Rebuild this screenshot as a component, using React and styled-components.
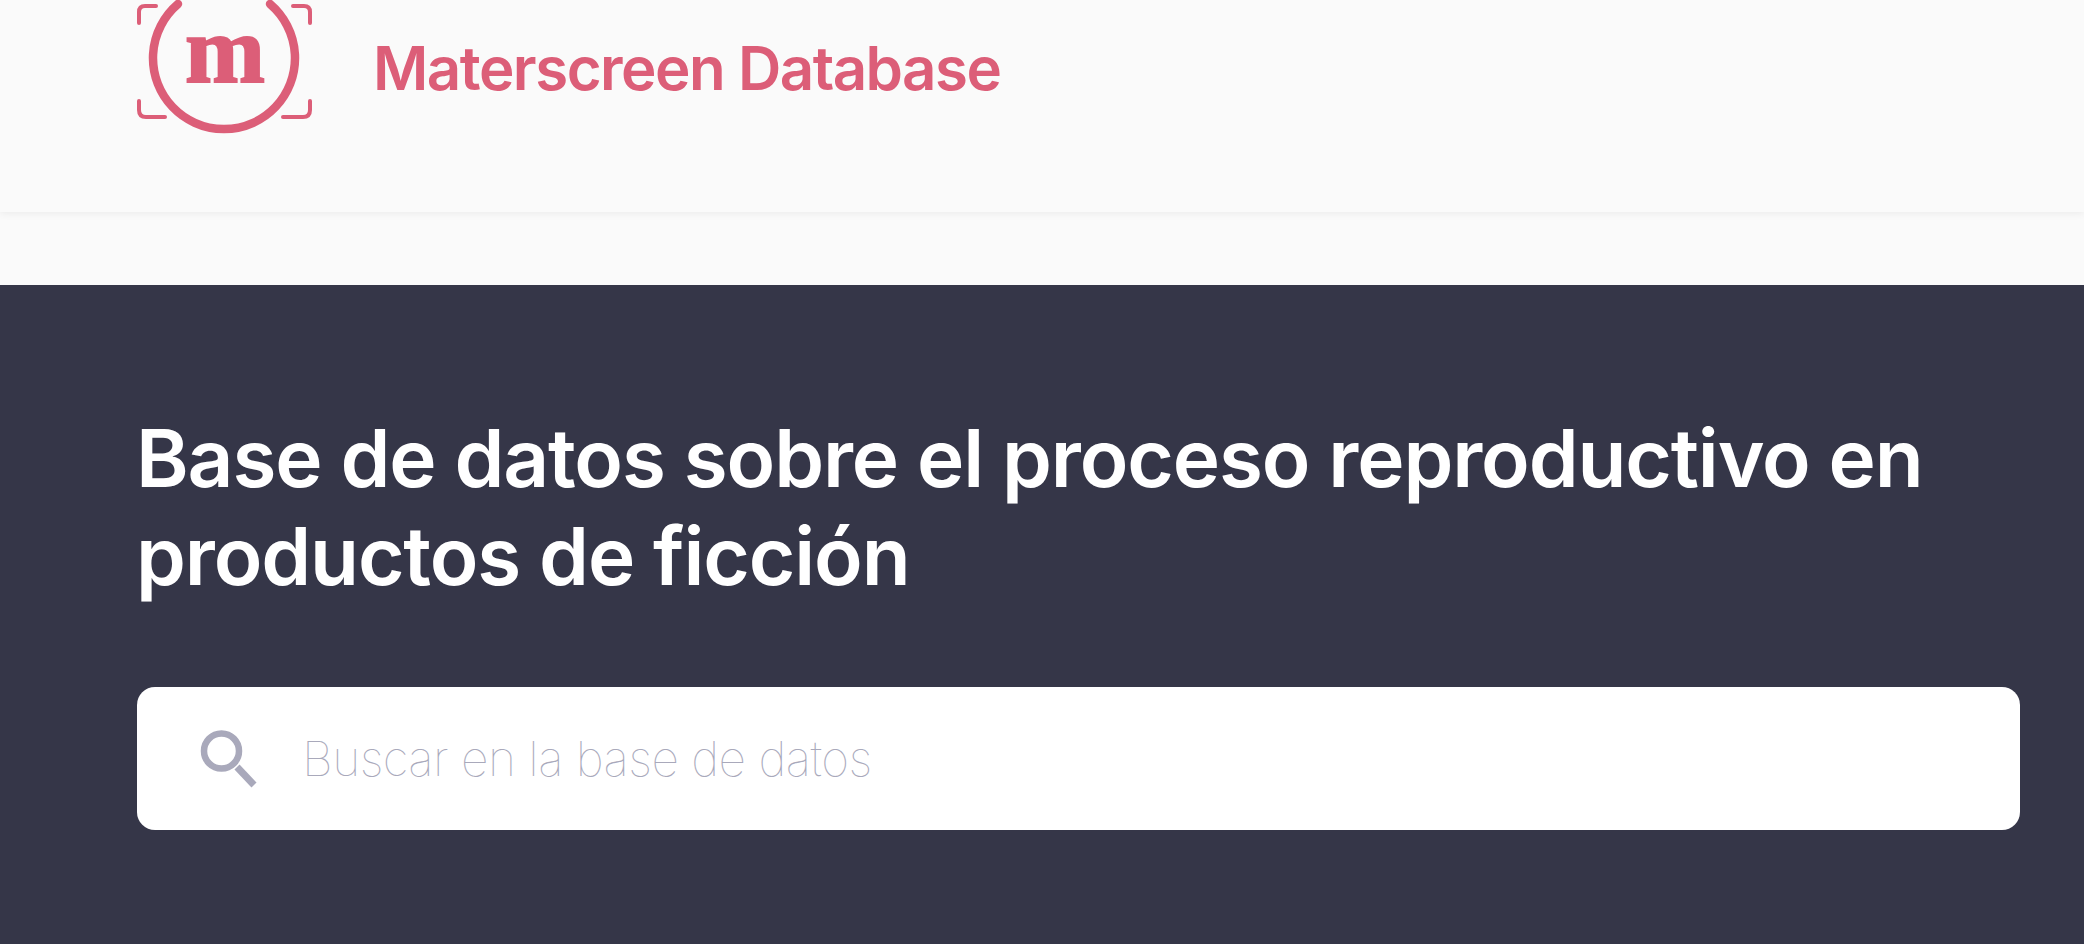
import React from "react";
import styled, { createGlobalStyle } from "styled-components";

const Global = createGlobalStyle`
  html, body { margin: 0; padding: 0; background: #fafafa; height: 100%; overflow: hidden; }
  body { font-family: Inter, "Liberation Sans", sans-serif; }
  #root { height: 100%; }
`;
const Page = styled.div`
  display: flex;
  flex-direction: column;
  height: 944px;
`;
const Header = styled.header`
  flex: none;
  height: 212px;
  box-sizing: border-box;
  background: #fafafa;
  box-shadow: 0 1px 8px rgba(0, 0, 0, 0.07);
  padding-left: 137px;
  display: flex;
  align-items: flex-start;
  gap: 60px;
`;
const Brand = styled.span`
  margin-top: 29px;
  font-size: 60px;
  line-height: 78px;
  font-weight: 600;
  letter-spacing: -1.5px;
  color: #dc5e78;
  white-space: nowrap;
`;
const Spacer = styled.div`
  flex: none;
  height: 73px;
`;
const Hero = styled.section`
  flex: 1;
  background: #353648;
  padding: 124px 64px 0 136px;
`;
const Title = styled.h1`
  margin: 0 0 82px;
  font-size: 80px;
  line-height: 98px;
  font-weight: 600;
  letter-spacing: -1.13px;
  color: #ffffff;
`;
const Search = styled.div`
  margin-left: 1px;
  height: 143px;
  background: #ffffff;
  border-radius: 18px;
  display: flex;
  align-items: center;
  padding-left: 63px;
  gap: 44px;
`;
const Placeholder = styled.span`
  font-size: 48px;
  font-weight: 100;
  letter-spacing: -0.55px;
  color: #a9a9bb;
  white-space: nowrap;
`;

const Logo = () => (
  <svg width="176" height="135" viewBox="137 0 176 135" style={{ flex: "none" }} aria-hidden="true">
    <g fill="none" stroke="#dc5e78" strokeLinecap="round">
      <path d="M178 4 A71 71 0 1 0 270 4" strokeWidth="8.5" />
      <g strokeWidth="4">
        <path d="M139 23 V12 Q139 6 145 6 H156" />
        <path d="M310 23 V12 Q310 6 304 6 H293" />
        <path d="M139 101 V110 Q139 117 146 117 H165" />
        <path d="M310 101 V110 Q310 117 303 117 H283" />
      </g>
    </g>
    <text x="225" y="82" textAnchor="middle" fontFamily="'Liberation Serif', serif" fontWeight="700" fontSize="96" fill="#dc5e78" stroke="#dc5e78" strokeWidth="2">m</text>
  </svg>
);

const SearchIcon = () => (
  <svg width="58" height="58" viewBox="0 0 58 58" style={{ flex: "none" }} aria-hidden="true">
    <g fill="none" stroke="#a9a9bb">
      <circle cx="21.5" cy="21" r="17.5" strokeWidth="6.5" />
      <path d="M37 37 L54 55" strokeWidth="7" />
    </g>
  </svg>
);

export default function App() {
  return (
    <Page>
      <Global />
      <Header>
        <Logo />
        <Brand>Materscreen Database</Brand>
      </Header>
      <Spacer />
      <Hero>
        <Title>Base de datos sobre el proceso reproductivo en productos de ficción</Title>
        <Search>
          <SearchIcon />
          <Placeholder>Buscar en la base de datos</Placeholder>
        </Search>
      </Hero>
    </Page>
  );
}
